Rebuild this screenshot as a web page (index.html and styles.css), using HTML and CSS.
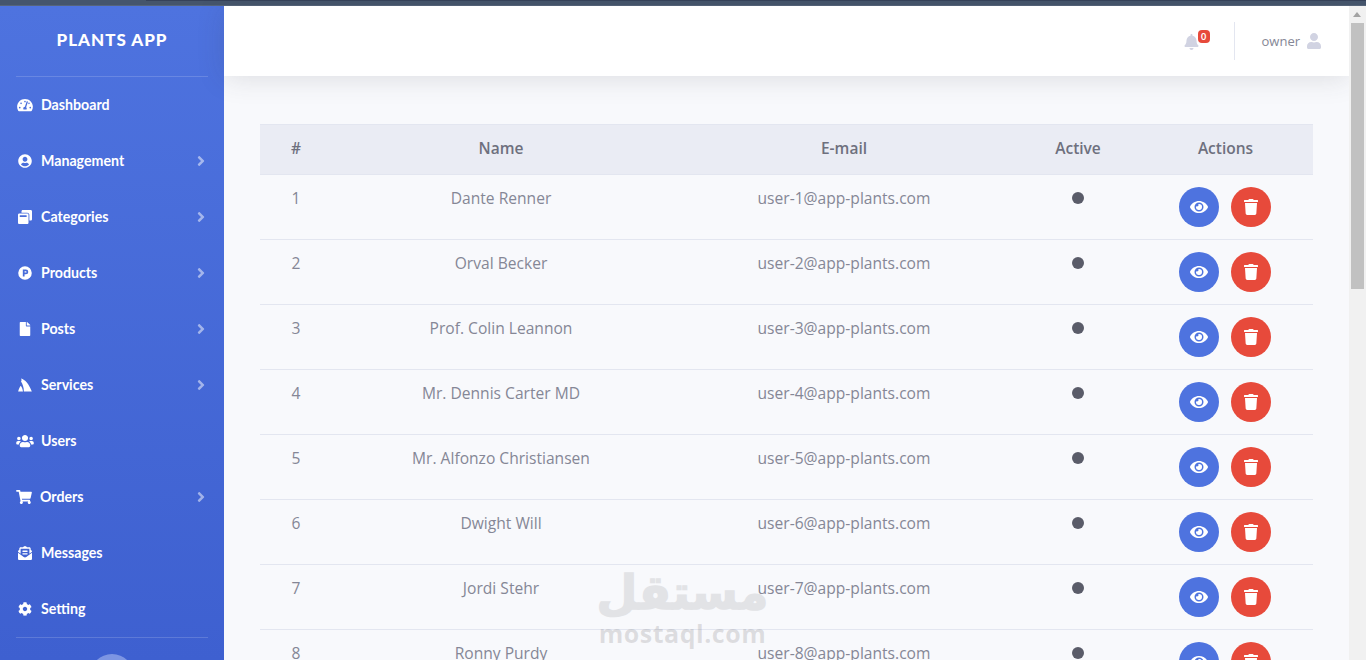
FILE: index.html
```html
<!DOCTYPE html>
<html lang="en">
<head>
<meta charset="utf-8">
<title>Plants App</title>
<link rel="stylesheet" href="styles.css">
</head>
<body>
<svg class="defs" aria-hidden="true">
  <symbol id="i-chev" viewBox="0 0 256 512"><path d="M224.300 273l-136 136c-9.400 9.400-24.600 9.400-33.900 0l-22.600-22.600c-9.400-9.400-9.400-24.600 0-33.900l96.400-96.400-96.400-96.400c-9.400-9.400-9.400-24.600 0-33.900L54.300 103c9.400-9.400 24.600-9.400 33.900 0l136 136c9.500 9.400 9.500 24.600.1 34z"/></symbol>
  <symbol id="i-eye" viewBox="0 0 576 512"><path d="M572.52 241.4C518.29 135.59 410.93 64 288 64S57.68 135.64 3.48 241.41a32.35 32.35 0 0 0 0 29.19C57.71 376.41 165.07 448 288 448s230.32-71.64 284.52-177.41a32.35 32.35 0 0 0 0-29.19zM288 400a144 144 0 1 1 144-144 143.93 143.93 0 0 1-144 144zm0-240a95.31 95.31 0 0 0-25.31 3.79 47.85 47.85 0 0 1-66.9 66.9A95.78 95.78 0 1 0 288 160z"/></symbol>
  <symbol id="i-trash" viewBox="0 0 448 512"><path d="M432 32H312l-9.4-18.7A24 24 0 0 0 281.1 0H166.8a23.72 23.72 0 0 0-21.4 13.3L136 32H16A16 16 0 0 0 0 48v32a16 16 0 0 0 16 16h416a16 16 0 0 0 16-16V48a16 16 0 0 0-16-16zM53.2 467a48 48 0 0 0 47.9 45h245.8a48 48 0 0 0 47.9-45L416 128H32z"/></symbol>
</svg>

<div class="chrome-strip"><div class="chrome-tab"></div></div>

<div class="shell">
  <aside class="sidebar">
    <div class="brand">PLANTS APP</div>
    <hr class="side-rule">
    <nav class="nav">
      <a class="nav-item"><svg class="nav-icon" viewBox="0 0 576 512"><path d="M288 32C128.94 32 0 160.94 0 320c0 52.8 14.25 102.26 39.06 144.8 5.61 9.62 16.3 15.2 27.44 15.2h443c11.14 0 21.83-5.58 27.44-15.2C561.75 422.26 576 372.8 576 320c0-159.06-128.94-288-288-288zm0 64c14.71 0 26.58 10.13 30.32 23.65-1.11 2.26-2.64 4.23-3.45 6.67l-9.22 27.67c-5.13 3.49-10.97 6.01-17.64 6.01-17.67 0-32-14.33-32-32S270.33 96 288 96zM96 384c-17.67 0-32-14.33-32-32s14.33-32 32-32 32 14.33 32 32-14.33 32-32 32zm48-160c-17.67 0-32-14.33-32-32s14.33-32 32-32 32 14.33 32 32-14.33 32-32 32zm246.77-72.41l-61.33 184C343.13 347.33 352 364.54 352 384c0 11.72-3.38 22.55-8.88 32H232.88c-5.5-9.45-8.88-20.28-8.88-32 0-33.94 26.5-61.43 59.9-63.59l61.34-184.01c4.17-12.56 17.73-19.45 30.36-15.17 12.57 4.19 19.35 17.79 15.17 30.36zm14.66 57.2l15.52-46.55c3.47-1.29 7.13-2.23 11.05-2.23 17.67 0 32 14.33 32 32s-14.33 32-32 32c-11.38-.01-20.89-6.28-26.57-15.22zM480 384c-17.67 0-32-14.33-32-32s14.33-32 32-32 32 14.33 32 32-14.33 32-32 32z"/></svg><span class="nav-label">Dashboard</span></a>
      <a class="nav-item"><svg class="nav-icon" viewBox="0 0 496 512"><path d="M248 8C111 8 0 119 0 256s111 248 248 248 248-111 248-248S385 8 248 8zm0 96c48.6 0 88 39.4 88 88s-39.4 88-88 88-88-39.4-88-88 39.4-88 88-88zm0 344c-58.7 0-111.3-26.6-146.5-68.2 18.8-35.4 55.6-59.8 98.5-59.8 2.4 0 4.8.4 7.1 1.1 13 4.2 26.6 6.9 40.9 6.9 14.3 0 28-2.7 40.9-6.9 2.3-.7 4.7-1.1 7.1-1.1 42.9 0 79.7 24.4 98.5 59.8C359.3 421.4 306.7 448 248 448z"/></svg><span class="nav-label">Management</span><svg class="nav-chev"><use href="#i-chev"/></svg></a>
      <a class="nav-item"><svg class="nav-icon" viewBox="0 0 512 512"><path d="M512 48v288c0 26.500-21.500 48-48 48h-48V176c0-44.100-35.900-80-80-80H128V48c0-26.500 21.500-48 48-48h288c26.500 0 48 21.500 48 48zM384 176v288c0 26.500-21.500 48-48 48H48c-26.500 0-48-21.500-48-48V176c0-26.500 21.500-48 48-48h288c26.500 0 48 21.500 48 48zm-68 28c0-6.600-5.400-12-12-12H76c-6.600 0-12 5.400-12 12v52h252v-52z"/></svg><span class="nav-label">Categories</span><svg class="nav-chev"><use href="#i-chev"/></svg></a>
      <a class="nav-item"><svg class="nav-icon" viewBox="0 0 512 512"><path fill-rule="evenodd" d="M256 8a248 248 0 1 0 0 496 248 248 0 0 0 0-496zM176 128h112a80 80 0 0 1 0 176h-48v80h-64zM240 192v48h48a24 24 0 0 0 0-48z"/></svg><span class="nav-label">Products</span><svg class="nav-chev"><use href="#i-chev"/></svg></a>
      <a class="nav-item"><svg class="nav-icon" viewBox="0 0 384 512"><path d="M224 136V0H24C10.700 0 0 10.700 0 24v464c0 13.300 10.700 24 24 24h336c13.300 0 24-10.700 24-24V160H248c-13.200 0-24-10.800-24-24zm160-14.100v6.100H256V0h6.100c6.400 0 12.500 2.500 17 7l97.900 98c4.500 4.500 7 10.600 7 16.900z"/></svg><span class="nav-label">Posts</span><svg class="nav-chev"><use href="#i-chev"/></svg></a>
      <a class="nav-item"><svg class="nav-icon" viewBox="0 0 512 512"><path d="M110 20C260 60 400 220 505 490H215C215 340 170 215 110 125 140 90 130 50 110 20zM5 490C35 390 65 325 100 285 145 345 170 410 182 490z"/></svg><span class="nav-label">Services</span><svg class="nav-chev"><use href="#i-chev"/></svg></a>
      <a class="nav-item"><svg class="nav-icon nav-icon-wide" viewBox="0 0 640 512"><path d="M96 224c35.300 0 64-28.700 64-64s-28.700-64-64-64-64 28.700-64 64 28.700 64 64 64zm448 0c35.300 0 64-28.700 64-64s-28.700-64-64-64-64 28.700-64 64 28.700 64 64 64zm32 32h-64c-17.600 0-33.500 7.100-45.100 18.600 40.300 22.100 68.900 62 75.100 109.400h66c17.700 0 32-14.300 32-32v-32c0-35.300-28.700-64-64-64zm-256 0c61.900 0 112-50.100 112-112S381.900 32 320 32 208 82.100 208 144s50.100 112 112 112zm76.800 32h-8.300c-20.800 10-43.900 16-68.500 16s-47.600-6-68.500-16h-8.300C179.600 288 128 339.600 128 403.200V432c0 26.500 21.500 48 48 48h288c26.500 0 48-21.500 48-48v-28.800c0-63.600-51.600-115.200-115.200-115.200zm-223.700-13.400C161.500 263.100 145.600 256 128 256H64c-35.300 0-64 28.700-64 64v32c0 17.700 14.300 32 32 32h65.900c6.300-47.400 34.900-87.300 75.200-109.400z"/></svg><span class="nav-label">Users</span></a>
      <a class="nav-item"><svg class="nav-icon nav-icon-cart" viewBox="0 0 576 512"><path d="M528.120 301.319l47.273-208C578.806 78.301 567.391 64 551.990 64H159.208l-9.166-44.810C147.758 8.021 137.930 0 126.529 0H24C10.745 0 0 10.745 0 24v16c0 13.255 10.745 24 24 24h69.883l70.248 343.435C147.325 417.100 136 435.222 136 456c0 30.928 25.072 56 56 56s56-25.072 56-56c0-15.674-6.447-29.835-16.824-40h209.647C430.447 426.165 424 440.326 424 456c0 30.928 25.072 56 56 56s56-25.072 56-56c0-22.172-12.888-41.332-31.579-50.405l5.517-24.276c3.413-15.018-8.002-29.319-23.403-29.319H218.117l-6.545-32h293.145c11.206 0 20.920-7.754 23.403-18.681z"/></svg><span class="nav-label">Orders</span><svg class="nav-chev"><use href="#i-chev"/></svg></a>
      <a class="nav-item"><svg class="nav-icon" viewBox="0 0 512 512"><path d="M176 216h160c8.840 0 16-7.160 16-16v-16c0-8.840-7.160-16-16-16H176c-8.840 0-16 7.160-16 16v16c0 8.840 7.160 16 16 16zm-16 80c0 8.840 7.160 16 16 16h160c8.840 0 16-7.160 16-16v-16c0-8.840-7.160-16-16-16H176c-8.840 0-16 7.160-16 16v16zm96 121.130c-16.420 0-32.840-5.060-46.860-15.190L0 250.860V464c0 26.510 21.490 48 48 48h416c26.510 0 48-21.490 48-48V250.860L302.860 401.940c-14.020 10.120-30.440 15.190-46.860 15.190zm237.610-254.180c-8.850-6.940-17.240-13.480-29.610-22.810V96c0-26.510-21.490-48-48-48h-77.550c-3.040-2.200-5.870-4.260-9.040-6.560C312.600 29.170 279.200-.35 256 0c-23.200-.35-56.590 29.170-73.410 41.440-3.170 2.300-6 4.360-9.040 6.560H96c-26.510 0-48 21.490-48 48v44.140c-12.370 9.330-20.760 15.870-29.610 22.810A47.995 47.995 0 0 0 0 200.720v10.650l96 69.350V96h320v184.720l96-69.350v-10.650c0-14.740-6.780-28.670-18.390-37.770z"/></svg><span class="nav-label">Messages</span></a>
      <a class="nav-item"><svg class="nav-icon" viewBox="0 0 512 512"><path d="M487.400 315.700l-42.600-24.600c4.300-23.200 4.300-47 0-70.200l42.600-24.600c4.900-2.800 7.100-8.600 5.500-14-11.100-35.600-30-67.800-54.700-94.600-3.800-4.100-10-5.100-14.800-2.300L380.800 110c-17.900-15.400-38.500-27.300-60.800-35.100V25.800c0-5.600-3.900-10.500-9.400-11.700-36.700-8.200-74.300-7.800-109.200 0-5.500 1.200-9.400 6.100-9.400 11.700V75c-22.200 7.900-42.800 19.800-60.800 35.100L88.700 85.500c-4.900-2.800-11-1.900-14.800 2.300-24.700 26.700-43.600 58.900-54.700 94.600-1.700 5.400.6 11.200 5.500 14L67.300 221c-4.300 23.200-4.300 47 0 70.200l-42.600 24.600c-4.900 2.800-7.100 8.600-5.500 14 11.100 35.600 30 67.800 54.700 94.600 3.800 4.100 10 5.100 14.800 2.300l42.600-24.600c17.900 15.400 38.500 27.300 60.800 35.100v49.200c0 5.600 3.900 10.500 9.400 11.700 36.700 8.200 74.300 7.800 109.200 0 5.500-1.200 9.400-6.100 9.400-11.700v-49.200c22.200-7.900 42.800-19.800 60.800-35.100l42.600 24.600c4.900 2.800 11 1.900 14.800-2.300 24.700-26.700 43.600-58.900 54.700-94.600 1.500-5.500-.7-11.300-5.600-14.100zM256 336c-44.100 0-80-35.900-80-80s35.900-80 80-80 80 35.900 80 80-35.900 80-80 80z"/></svg><span class="nav-label">Setting</span></a>
    </nav>
    <hr class="side-rule">
    <div class="side-avatar"></div>
  </aside>

  <main class="main">
    <header class="topbar">
      <div class="bell">
        <svg class="bell-icon" viewBox="0 0 448 512"><path d="M224 512c35.320 0 63.970-28.650 63.970-64H160.030c0 35.350 28.650 64 63.970 64zm215.390-149.710c-19.320-20.760-55.470-51.990-55.470-154.290 0-77.700-54.480-139.900-127.940-155.160V32c0-17.670-14.320-32-31.980-32s-31.980 14.330-31.980 32v20.840C118.560 68.100 64.080 130.300 64.080 208c0 102.300-36.150 133.530-55.470 154.290-6 6.450-8.660 14.160-8.610 21.710.11 16.400 12.980 32 32.100 32h383.800c19.120 0 32-15.600 32.100-32 .05-7.550-2.610-15.270-8.610-21.710z"/></svg>
        <span class="badge">0</span>
      </div>
      <div class="top-divider"></div>
      <span class="owner">owner</span>
      <svg class="owner-icon" viewBox="0 0 448 512"><path d="M224 256c70.700 0 128-57.300 128-128S294.700 0 224 0 96 57.300 96 128s57.300 128 128 128zm89.600 32h-16.700c-22.200 10.200-46.900 16-72.900 16s-50.600-5.800-72.900-16h-16.700C60.200 288 0 348.200 0 422.400V464c0 26.500 21.500 48 48 48h352c26.500 0 48-21.500 48-48v-41.600c0-74.200-60.200-134.400-134.400-134.400z"/></svg>
    </header>

    <section class="content">
      <table class="users">
        <colgroup>
          <col class="c-num"><col class="c-name"><col class="c-mail"><col class="c-active"><col class="c-actions">
        </colgroup>
        <thead>
          <tr><th>#</th><th>Name</th><th>E-mail</th><th>Active</th><th>Actions</th></tr>
        </thead>
        <tbody>
          <tr><td>1</td><td>Dante Renner</td><td>user-1@app-plants.com</td><td><span class="dot"></span></td><td><div class="actions"><button class="btn btn-view"><svg class="ico-eye"><use href="#i-eye"/></svg></button><button class="btn btn-del"><svg class="ico-trash"><use href="#i-trash"/></svg></button></div></td></tr>
          <tr><td>2</td><td>Orval Becker</td><td>user-2@app-plants.com</td><td><span class="dot"></span></td><td><div class="actions"><button class="btn btn-view"><svg class="ico-eye"><use href="#i-eye"/></svg></button><button class="btn btn-del"><svg class="ico-trash"><use href="#i-trash"/></svg></button></div></td></tr>
          <tr><td>3</td><td>Prof. Colin Leannon</td><td>user-3@app-plants.com</td><td><span class="dot"></span></td><td><div class="actions"><button class="btn btn-view"><svg class="ico-eye"><use href="#i-eye"/></svg></button><button class="btn btn-del"><svg class="ico-trash"><use href="#i-trash"/></svg></button></div></td></tr>
          <tr><td>4</td><td>Mr. Dennis Carter MD</td><td>user-4@app-plants.com</td><td><span class="dot"></span></td><td><div class="actions"><button class="btn btn-view"><svg class="ico-eye"><use href="#i-eye"/></svg></button><button class="btn btn-del"><svg class="ico-trash"><use href="#i-trash"/></svg></button></div></td></tr>
          <tr><td>5</td><td>Mr. Alfonzo Christiansen</td><td>user-5@app-plants.com</td><td><span class="dot"></span></td><td><div class="actions"><button class="btn btn-view"><svg class="ico-eye"><use href="#i-eye"/></svg></button><button class="btn btn-del"><svg class="ico-trash"><use href="#i-trash"/></svg></button></div></td></tr>
          <tr><td>6</td><td>Dwight Will</td><td>user-6@app-plants.com</td><td><span class="dot"></span></td><td><div class="actions"><button class="btn btn-view"><svg class="ico-eye"><use href="#i-eye"/></svg></button><button class="btn btn-del"><svg class="ico-trash"><use href="#i-trash"/></svg></button></div></td></tr>
          <tr><td>7</td><td>Jordi Stehr</td><td>user-7@app-plants.com</td><td><span class="dot"></span></td><td><div class="actions"><button class="btn btn-view"><svg class="ico-eye"><use href="#i-eye"/></svg></button><button class="btn btn-del"><svg class="ico-trash"><use href="#i-trash"/></svg></button></div></td></tr>
          <tr><td>8</td><td>Ronny Purdy</td><td>user-8@app-plants.com</td><td><span class="dot"></span></td><td><div class="actions"><button class="btn btn-view"><svg class="ico-eye"><use href="#i-eye"/></svg></button><button class="btn btn-del"><svg class="ico-trash"><use href="#i-trash"/></svg></button></div></td></tr>
        </tbody>
      </table>
    </section>
  </main>

  <div class="scrollbar">
    <div class="scroll-arrow"></div>
    <div class="scroll-thumb"></div>
  </div>
</div>

<div class="watermark">
  <div class="wm-ar" lang="ar" dir="rtl">مستقل</div>
  <div class="wm-en">mostaql.com</div>
</div>
</body>
</html>
```

FILE: styles.css
```css
* { box-sizing: border-box; }
html, body { margin: 0; height: 660px; overflow: hidden; }
body { font-family: "Open Sans", "Liberation Sans", sans-serif; background: #f8f9fc; color: #858796; position: relative; }
.defs { width: 0; height: 0; position: absolute; }

.chrome-strip { height: 6px; background: #45556c; border-bottom: 1px solid #56657a; }
.chrome-tab { height: 1px; margin-left: 146px; background: #36425a; }

.shell { display: flex; height: 654px; }

.sidebar { width: 224px; flex: none; background: linear-gradient(180deg, #4e73df 0%, #3e60d0 100%); color: #fff; padding: 0 16px; overflow: hidden; }
.brand { height: 70px; display: flex; align-items: center; justify-content: center; font: 900 17px/1 Lato, sans-serif; letter-spacing: 1px; padding-bottom: 3px; }
.side-rule { margin: 0; border: 0; border-top: 1px solid rgba(255,255,255,.16); }
.nav { display: flex; flex-direction: column; }
.nav-item { height: 56px; display: flex; align-items: center; font: 700 14.2px/1 Lato, sans-serif; color: #fff; }
.nav-label { flex: 1; padding-top: 1px; }
.nav-icon { width: 16px; height: 14px; fill: #fff; flex: none; margin: 0 8px 0 1px; }
.nav-icon-wide { width: 18px; margin: 0 7px 0 0; }
.nav-icon-cart { width: 16px; margin: 0 8px 0 0; }
.nav-chev { width: 10px; height: 16px; fill: rgba(255,255,255,.5); flex: none; margin-right: 2px; }
.side-avatar { width: 44px; height: 44px; border-radius: 50%; background: #7d95e3; margin: 16px auto 0; }

.main { flex: 1; min-width: 0; display: flex; flex-direction: column; }
.topbar { height: 70px; flex: none; background: #fff; box-shadow: 0 2px 28px rgba(58,59,69,.15); display: flex; align-items: center; justify-content: flex-end; padding: 0 28px 0 0; position: relative; }
.bell { position: relative; margin-right: 35px; display: flex; }
.bell-icon { width: 15px; height: 16px; fill: #d1d3e2; margin-top: 2px; }
.badge { position: absolute; left: 14px; top: -2px; min-width: 12px; height: 13px; border-radius: 4px; background: #e74a3b; color: #fff; font: 700 9px/13px Lato, sans-serif; text-align: center; }
.top-divider { width: 1px; height: 38px; background: #e3e6f0; margin-right: 27px; }
.owner { font: 400 13px/1 "Open Sans", sans-serif; color: #858796; margin-right: 7px; }
.owner-icon { width: 14px; height: 16px; fill: #d1d3e2; }

.content { padding: 48px 36px 0; }
.users { width: 100%; border-collapse: collapse; table-layout: fixed; font-size: 15.6px; }
.c-num { width: 72px; }
.c-name { width: 338px; }
.c-mail { width: 348px; }
.c-active { width: 120px; }
.c-actions { width: 175px; }
.users th { height: 50px; background: #eaecf4; border-top: 1px solid #e3e6f0; border-bottom: 1px solid #e3e6f0; font: 600 15.5px/24px "Open Sans", sans-serif; color: #6e707e; text-align: center; padding: 0 0 4px; }
.users td { height: 65px; padding: 12px 0; line-height: 23px; text-align: center; vertical-align: top; border-bottom: 1px solid #e3e6f0; }
.dot { display: block; width: 12px; height: 12px; border-radius: 50%; background: #5a5c69; margin: 5px auto 0; }
.actions { display: flex; justify-content: center; gap: 12px; padding-right: 1px; }
.btn { width: 40px; height: 40px; border: 0; border-radius: 50%; padding: 0; display: flex; align-items: center; justify-content: center; }
.btn-view { background: #4e73df; }
.btn-del { background: #e74a3b; }
.ico-eye { width: 18px; height: 16px; fill: #fff; }
.ico-trash { width: 14px; height: 16px; fill: #fff; }

.scrollbar { width: 17px; flex: none; background: #f1f1f1; position: relative; padding: 17px 2px 0; }
.scroll-arrow { position: absolute; top: 6px; left: 4px; width: 0; height: 0; border: 4px solid transparent; border-top: 0; border-bottom: 5px solid #a3a3a3; }
.scroll-thumb { height: 266px; background: #c1c1c1; }

.watermark { position: absolute; left: 580px; top: 568px; width: 205px; text-align: center; pointer-events: none; }
.wm-ar { font: 700 47px/50px "DejaVu Sans", sans-serif; color: #e2e3e6; -webkit-text-stroke: 1.5px #e2e3e6; }
.wm-en { font: 700 25px/30px "Open Sans", sans-serif; letter-spacing: .5px; color: rgba(120,120,120,.22); }
```
